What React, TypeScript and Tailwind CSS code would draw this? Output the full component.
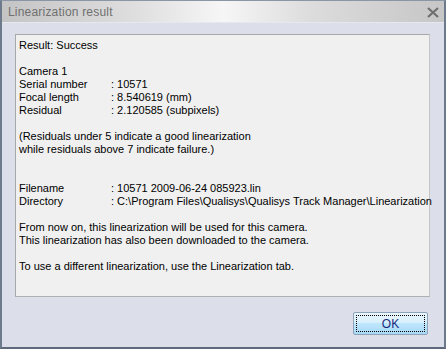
import React from "react";

const rows: [string, string][] = [
  ["Serial number", ": 10571"],
  ["Focal length", ": 8.540619 (mm)"],
  ["Residual", ": 2.120585 (subpixels)"],
];

const files: [string, string][] = [
  ["Filename", ": 10571 2009-06-24 085923.lin"],
  ["Directory", ": C:\\Program Files\\Qualisys\\Qualisys Track Manager\\Linearization"],
];

function Row({ label, value }: { label: string; value: string }) {
  return (
    <div className="flex h-[13px]">
      <span className="w-[92px] shrink-0">{label}</span>
      <span className="whitespace-nowrap">{value}</span>
    </div>
  );
}

export default function App() {
  return (
    <div
      className="flex h-[349px] w-[446px] flex-col overflow-hidden border-x-2 border-b-2 border-t border-x-[#6c7a8c] border-b-[#5d6a7c] border-t-[#8a96a6] bg-[#dcdfea]"
      style={{ fontFamily: '"Liberation Sans", Arial, sans-serif' }}
    >
      {/* title bar */}
      <div className="flex h-[22px] shrink-0 items-center justify-between border-b border-[#e6e8ee] bg-[linear-gradient(90deg,#c4c4c4_0%,#dedede_30%,#f6f6f6_50%,#dcdcdc_70%,#c6c6c6_100%)] pl-[6px] pr-[5px]">
        <span className="text-[12px] tracking-[0.2px] text-[#707070]">Linearization result</span>
        <svg width="12" height="11" viewBox="0 0 12 11" className="mt-[1px]">
          <path d="M1 1 L11 10 M11 1 L1 10" stroke="#6f6f6f" strokeWidth="2.2" />
        </svg>
      </div>

      {/* client */}
      <div className="flex flex-1 flex-col px-[13px] pt-[11px]">
        <div className="h-[263px] w-[415px] border border-t-[#a8a8a8] border-l-[#a8a8a8] border-r-[#c4c4c4] border-b-[#b0b0b0] bg-[#f0f0f0] pl-[3px] pt-[4px] text-[11px] leading-[13px] text-black">
          <div>Result: Success</div>
          <div className="h-[13px]" />
          <div>Camera 1</div>
          {rows.map(([l, v]) => (
            <Row key={l} label={l} value={v} />
          ))}
          <div className="h-[13px]" />
          <div>(Residuals under 5 indicate a good linearization</div>
          <div>while residuals above 7 indicate failure.)</div>
          <div className="h-[26px]" />
          {files.map(([l, v]) => (
            <Row key={l} label={l} value={v} />
          ))}
          <div className="h-[13px]" />
          <div>From now on, this linearization will be used for this camera.</div>
          <div>This linearization has also been downloaded to the camera.</div>
          <div className="h-[13px]" />
          <div>To use a different linearization, use the Linearization tab.</div>
        </div>

        <div className="mt-[15px] flex justify-end pr-[3px]">
          <button className="flex h-[23px] w-[75px] items-center justify-center rounded-[2px] border border-[#8fa3b8] bg-[linear-gradient(180deg,#eaf6fd_0%,#d9f0fc_45%,#bee6fd_50%,#a7d9f5_100%)] p-[2px]">
            <span className="flex h-full w-full items-center justify-center border border-dotted border-black text-[12px] leading-none text-[#1a2a7a]">
              OK
            </span>
          </button>
        </div>
      </div>
    </div>
  );
}
